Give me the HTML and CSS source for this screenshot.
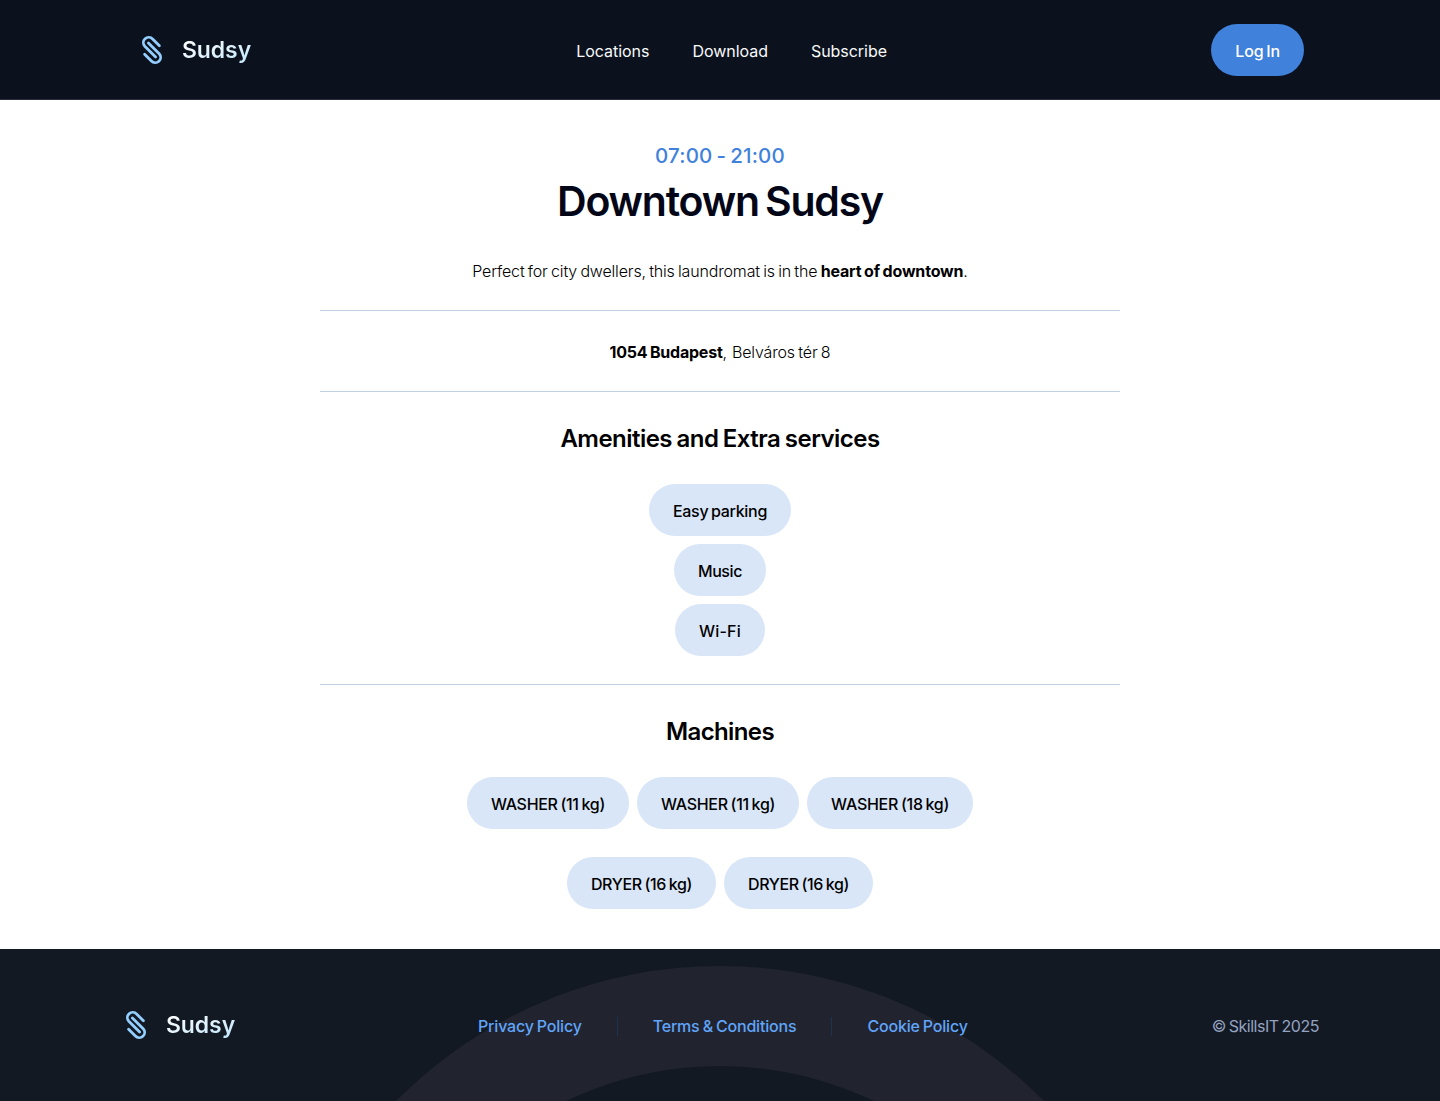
FILE: index.html
```html
<!DOCTYPE html>
<html lang="en">
<head>
<meta charset="utf-8">
<title>Downtown Sudsy</title>
<link rel="stylesheet" href="styles.css">
</head>
<body>
<header class="header">
  <div class="header-inner">
    <a class="logo">
      <svg class="logo-icon" viewBox="-12 -16 24 32" width="24" height="32"><path d="M7.4-4.2 .6-11A5.1 5.1 0 0 0-7.2-3.8L3.6 7M-7.4 4.2-.6 11A5.1 5.1 0 0 0 7.2 3.8L-3.6-7"/></svg>
      <span class="logo-text">Sudsy</span>
    </a>
    <nav class="nav"><a>Locations</a><a>Download</a><a>Subscribe</a></nav>
    <a class="login">Log In</a>
  </div>
</header>
<main class="main">
  <p class="hours">07:00 - 21:00</p>
  <h1 class="title">Downtown Sudsy</h1>
  <section class="text intro"><span>Perfect for city dwellers, this laundromat is in the </span><strong>heart of downtown</strong>.</section>
  <section class="text address"><strong>1054 Budapest</strong><span class="comma">,</span><span>Belváros tér 8</span></section>
  <section class="amenities">
    <h2 class="subtitle">Amenities and Extra services</h2>
    <ul class="stack">
      <li class="pill">Easy parking</li>
      <li class="pill pill-music">Music</li>
      <li class="pill pill-wifi">Wi-Fi</li>
    </ul>
  </section>
  <section class="machines">
    <h2 class="subtitle subtitle-machines">Machines</h2>
    <ul class="row">
      <li class="pill">WASHER (11 kg)</li>
      <li class="pill">WASHER (11 kg)</li>
      <li class="pill pill-large">WASHER (18 kg)</li>
    </ul>
    <ul class="row">
      <li class="pill pill-dryer">DRYER (16 kg)</li>
      <li class="pill pill-dryer">DRYER (16 kg)</li>
    </ul>
  </section>
</main>
<footer class="footer">
  <div class="ring"></div>
  <div class="footer-inner">
    <a class="logo">
      <svg class="logo-icon" viewBox="-12 -16 24 32" width="24" height="32"><path d="M7.4-4.2 .6-11A5.1 5.1 0 0 0-7.2-3.8L3.6 7M-7.4 4.2-.6 11A5.1 5.1 0 0 0 7.2 3.8L-3.6-7"/></svg>
      <span class="logo-text">Sudsy</span>
    </a>
    <nav class="legal"><a>Privacy Policy</a><i class="divider"></i><a>Terms &amp; Conditions</a><i class="divider"></i><a>Cookie Policy</a></nav>
    <p class="copyright">© SkillsIT 2025</p>
  </div>
</footer>
</body>
</html>
```
FILE: styles.css
```css
* { box-sizing: border-box; margin: 0; padding: 0; }
body { font: 400 16px/24px Inter, "Liberation Sans", sans-serif; color: #000; background: #fff; }
ul { list-style: none; }

.header { height: 100px; background: #0c121d; border-bottom: 1px solid #2b2d38; }
.header-inner { width: 1168px; height: 99px; margin: 0 auto; display: flex; align-items: center; justify-content: space-between; }
.logo { display: flex; align-items: center; width: 116px; padding-left: 4px; gap: 18px; }
.logo-icon { flex: none; fill: none; stroke: #93cefe; stroke-width: 2.8; stroke-linecap: round; stroke-linejoin: round; }
.logo-text { font-size: 23px; font-weight: 600; letter-spacing: -.1px; background: linear-gradient(160deg, #fff 10%, #c4e7fb 90%); background-clip: text; color: transparent; line-height: 32px; }
.nav { display: flex; gap: 43px; color: #f8fafc; padding-top: 3px; letter-spacing: -.04px; }
.login { padding: 15px 24px 13px; border-radius: 26px; background: #3f81db; color: #fff; font-weight: 500; letter-spacing: -.1px; word-spacing: -1.5px; }

.main { width: 800px; height: 849px; margin: 0 auto; padding-top: 40px; text-align: center; }
.hours { font-size: 20.5px; font-weight: 500; line-height: 32px; letter-spacing: .2px; word-spacing: -1.7px; color: #3f81db; }
.title { font-size: 41px; font-weight: 600; line-height: 58px; letter-spacing: -1.2px; word-spacing: -3px; color: #020617; }
.text { font-weight: 300; border-bottom: 1px solid #c1d2e5; word-spacing: -1px; white-space: nowrap; }
.text strong { font-weight: 700; }
.intro { padding: 29px 0 27px; letter-spacing: -.165px; }
.address { padding: 29px 0 27px; letter-spacing: -.15px; }
.address strong { letter-spacing: -.22px; }
.comma { margin-right: 5px; }
.amenities { padding: 28px 0; border-bottom: 1px solid #c1d2e5; }
.machines { padding-top: 28px; }
.subtitle { font-size: 24px; font-weight: 600; line-height: 38px; letter-spacing: -.53px; word-spacing: -1px; margin-bottom: 26px; }
.subtitle-machines { letter-spacing: -.63px; }
.stack { display: flex; flex-direction: column; align-items: center; gap: 8px; }
.row { display: flex; justify-content: center; gap: 8px; }
.row + .row { margin-top: 28px; }
.pill { padding: 15px 24px 13px; border-radius: 26px; background: #d9e6f7; font-weight: 500; letter-spacing: -.3px; word-spacing: -1.2px; white-space: nowrap; }
.pill-music { letter-spacing: -.42px; }
.pill-wifi { letter-spacing: .2px; }
.pill-large { letter-spacing: -.265px; }
.pill-dryer { letter-spacing: -.365px; }

.footer { position: relative; height: 152px; overflow: hidden; background: #131923; }
.ring { position: absolute; left: 50%; top: 17px; width: 912px; height: 912px; margin-left: -456px; border: 100px solid #21242f; border-radius: 50%; }
.footer-inner { position: relative; width: 1200px; height: 152px; margin: 0 auto; display: flex; align-items: center; justify-content: space-between; }
.legal { display: flex; align-items: center; gap: 35px; margin-right: 2px; color: #60a5fa; font-weight: 500; letter-spacing: -.19px; word-spacing: -1px; padding-top: 2px; white-space: nowrap; }
.divider { width: 1px; height: 19px; background: #1e3350; }
.copyright { color: #94a3c0; letter-spacing: -.47px; word-spacing: -1.2px; padding: 2px 1px 0 0; }
```
